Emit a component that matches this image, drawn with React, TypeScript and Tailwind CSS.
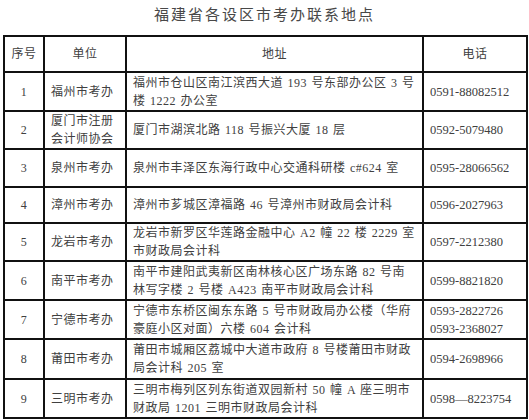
const rows = [
  { no: '1', unit: ['福州市考办'], addr: ['福州市仓山区南江滨西大道 193 号东部办公区 3 号', '楼 1222 办公室'], tel: ['0591-88082512'], h: 'h-[39px]' },
  { no: '2', unit: ['厦门市注册', '会计师协会'], addr: ['厦门市湖滨北路 118 号振兴大厦 18 层'], tel: ['0592-5079480'], h: 'h-[38px]' },
  { no: '3', unit: ['泉州市考办'], addr: ['泉州市丰泽区东海行政中心交通科研楼 c#624 室'], tel: ['0595-28066562'], h: 'h-[38px]' },
  { no: '4', unit: ['漳州市考办'], addr: ['漳州市芗城区漳福路 46 号漳州市财政局会计科'], tel: ['0596-2027963'], h: 'h-[36px]' },
  { no: '5', unit: ['龙岩市考办'], addr: ['龙岩市新罗区华莲路金融中心 A2 幢 22 楼 2229 室', '市财政局会计科'], tel: ['0597-2212380'], h: 'h-[38px]' },
  { no: '6', unit: ['南平市考办'], addr: ['南平市建阳武夷新区南林核心区广场东路 82 号南', '林写字楼 2 号楼 A423 南平市财政局会计科'], tel: ['0599-8821820'], h: 'h-[39px]' },
  { no: '7', unit: ['宁德市考办'], addr: ['宁德市东桥区闽东东路 5 号市财政局办公楼（华府', '豪庭小区对面）六楼 604 会计科'], tel: ['0593-2822726', '0593-2368027'], h: 'h-[39px]' },
  { no: '8', unit: ['莆田市考办'], addr: ['莆田市城厢区荔城中大道市政府 8 号楼莆田市财政', '局会计科 205 室'], tel: ['0594-2698966'], h: 'h-[40px]' },
  { no: '9', unit: ['三明市考办'], addr: ['三明市梅列区列东街道双园新村 50 幢 A 座三明市', '财政局 1201 三明市财政局会计科'], tel: ['0598—8223754'], h: 'h-[39px]' },
]

function Lines({ items }: { items: string[] }) {
  return (
    <>
      {items.map((t, i) => (
        <div key={i} className="h-[18px] leading-[18px] whitespace-nowrap">{t}</div>
      ))}
    </>
  )
}

const cell = 'border-2 border-[#111] p-0 align-middle'

export default function App() {
  return (
    <div
      className="w-[529px] h-[420px] bg-white text-[#404040] overflow-hidden"
      style={{ fontFamily: '"Liberation Serif", "Noto Sans CJK SC", serif' }}
    >
      {/* Title */}
      <div className="h-[35px] pt-[6px] text-center text-[15px] leading-[18px] tracking-[2px] text-[#484848]">
        福建省各设区市考办联系地点
      </div>

      <table className="ml-[3px] w-[523px] table-fixed border-collapse border-2 border-[#111] text-[12px] tracking-[0.5px]">
        <colgroup>
          <col className="w-[40px]" />
          <col className="w-[82px]" />
          <col className="w-[297px]" />
          <col className="w-[104px]" />
        </colgroup>
        <thead>
          <tr className="h-[36px]">
            <th className={`${cell} font-normal text-center`}>序号</th>
            <th className={`${cell} font-normal text-center`}>单位</th>
            <th className={`${cell} font-normal text-center`}>地址</th>
            <th className={`${cell} font-normal text-center`}>电话</th>
          </tr>
        </thead>
        <tbody>
          {rows.map((r) => (
            <tr key={r.no} className={r.h}>
              <td className={`${cell} text-center`}>
                <Lines items={[r.no]} />
              </td>
              <td className={`${cell} pl-[6px]`}>
                <Lines items={r.unit} />
              </td>
              <td className={`${cell} pl-[6px] [word-spacing:1px]`}>
                <Lines items={r.addr} />
              </td>
              <td className={`${cell} pl-[6px] tracking-normal text-[12.5px]`}>
                <Lines items={r.tel} />
              </td>
            </tr>
          ))}
        </tbody>
      </table>
    </div>
  )
}
